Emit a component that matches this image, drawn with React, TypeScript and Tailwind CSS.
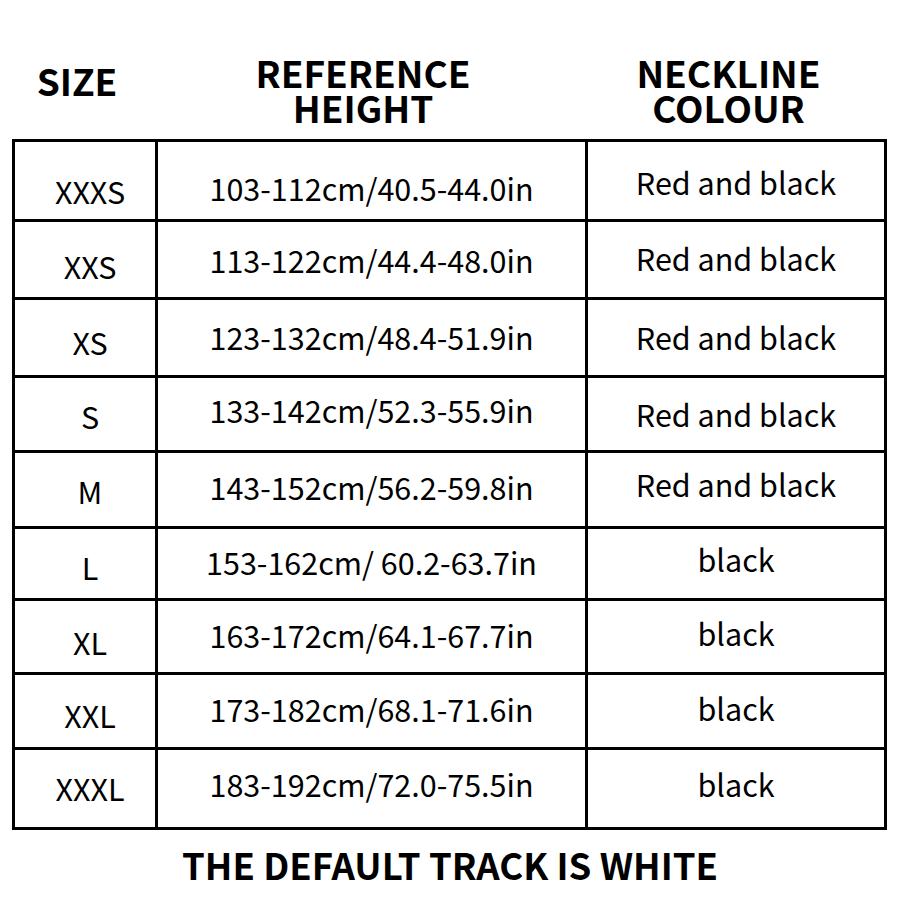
const rows = [
  { size: "XXXS", height: "103-112cm/40.5-44.0in", colour: "Red and black", h: "h-[80px]", s: "translate-y-[10px]", m: "translate-y-[7px]", c: "translate-y-[1px]" },
  { size: "XXS", height: "113-122cm/44.4-48.0in", colour: "Red and black", h: "h-[78px]", s: "translate-y-[6px]", m: "translate-y-[0px]", c: "-translate-y-[2px]" },
  { size: "XS", height: "123-132cm/48.4-51.9in", colour: "Red and black", h: "h-[78px]", s: "translate-y-[4px]", m: "-translate-y-[1px]", c: "-translate-y-[1px]" },
  { size: "S", height: "133-142cm/52.3-55.9in", colour: "Red and black", h: "h-[75px]", s: "translate-y-[2px]", m: "-translate-y-[4px]", c: "translate-y-[0px]" },
  { size: "M", height: "143-152cm/56.2-59.8in", colour: "Red and black", h: "h-[76px]", s: "translate-y-[1px]", m: "-translate-y-[3px]", c: "-translate-y-[6px]" },
  { size: "L", height: "153-162cm/ 60.2-63.7in", colour: "black", h: "h-[72px]", s: "translate-y-[3px]", m: "-translate-y-[2px]", c: "-translate-y-[5px]" },
  { size: "XL", height: "163-172cm/64.1-67.7in", colour: "black", h: "h-[74px]", s: "translate-y-[5px]", m: "-translate-y-[2px]", c: "-translate-y-[4px]" },
  { size: "XXL", height: "173-182cm/68.1-71.6in", colour: "black", h: "h-[75px]", s: "translate-y-[4px]", m: "-translate-y-[2px]", c: "-translate-y-[3px]" },
  { size: "XXXL", height: "183-192cm/72.0-75.5in", colour: "black", h: "h-[80px]", s: "-translate-y-[1px]", m: "-translate-y-[5px]", c: "-translate-y-[5px]" },
];

const cols = "grid grid-cols-[143px_430px_299px]";
const cell = "flex items-center justify-center border-b-[3px] border-r-[3px] border-black text-[30.5px] leading-[36px]";

export default function App() {
  return (
    <div className="h-[900px] w-[900px] overflow-hidden bg-white font-['Noto_Sans_CJK_SC','Noto_Sans',sans-serif] text-black">
      <div className={`${cols} h-[139px] pl-[15px]`}>
        <div className="pt-[63px] pr-[19px] text-center text-[37px] font-bold leading-[35px]">SIZE</div>
        <div className="pt-[55px] pr-[20px] text-center text-[37px] font-bold leading-[35px]">
          REFERENCE
          <br />
          HEIGHT
        </div>
        <div className="pt-[55px] pr-[18px] text-center text-[37px] font-bold leading-[35px]">
          NECKLINE
          <br />
          COLOUR
        </div>
      </div>

      <div className="ml-[12px] w-[875px] border-l-[3px] border-t-[3px] border-black">
        {rows.map((r) => (
          <div key={r.size} className={`${cols} ${r.h}`}>
            <div className={`${cell} pl-[10px]`}>
              <span className={r.s}>{r.size}</span>
            </div>
            <div className={cell}>
              <span className={r.m}>{r.height}</span>
            </div>
            <div className={cell}>
              <span className={r.c}>{r.colour}</span>
            </div>
          </div>
        ))}
      </div>

      <div className="mt-[15px] text-center text-[36.5px] font-bold leading-[40px]">THE DEFAULT TRACK IS WHITE</div>
    </div>
  );
}
